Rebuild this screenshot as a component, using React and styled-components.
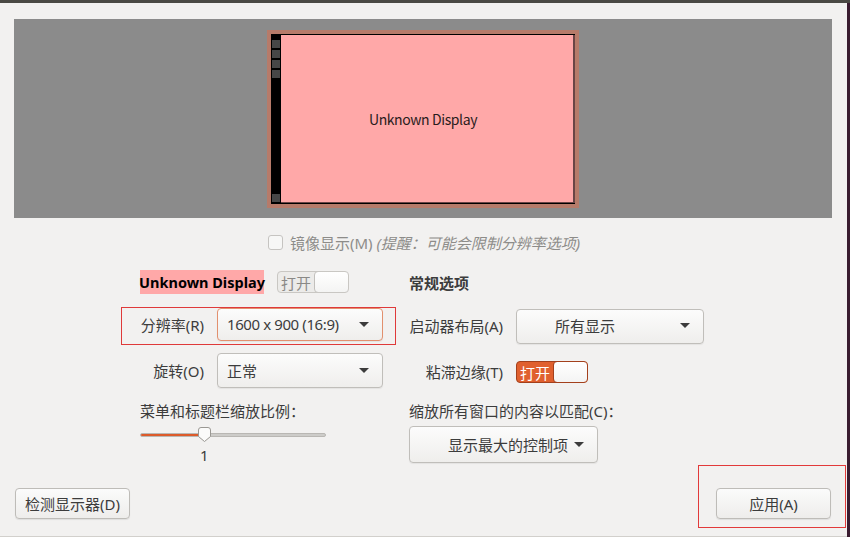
import React from "react";
import styled, { createGlobalStyle } from "styled-components";

const Global = createGlobalStyle`
  html, body { margin: 0; padding: 0; background: #f2f1f0; }
  body { font-family: "Noto Sans", "Noto Sans CJK SC", sans-serif; font-size: 15px; color: #3c3c3c; }
  * { box-sizing: border-box; }
`;

const Root = styled.div`
  width: 850px;
  height: 537px;
  display: flex;
  flex-direction: column;
  overflow: hidden;
`;

const TopBar = styled.div`
  height: 3px;
  background: #4a4944;
  flex: none;
`;

const Main = styled.div`
  flex: 1;
  display: flex;
  min-height: 0;
`;

const Content = styled.div`
  width: 847px;
  display: flex;
  flex-direction: column;
  background: #f2f1f0;
  border-bottom: 1px solid #d2d0cc;
`;

const Edge = styled.div`
  flex: 1;
  background: #3a1c30;
`;

const Preview = styled.div`
  margin: 16px 0 0 14px;
  width: 818px;
  height: 199px;
  background: #8b8b8b;
  display: flex;
  align-items: center;
  justify-content: center;
  flex: none;
`;

const Monitor = styled.div`
  width: 312px;
  height: 178px;
  border: 4px solid #b67b6a;
  background: #000;
  display: flex;
`;

const Launcher = styled.div`
  width: 10px;
  display: flex;
  flex-direction: column;
  padding: 6px 1px 2px 1px;
  gap: 2px;
`;

const LauncherIcon = styled.div`
  width: 8px;
  height: 8px;
  background: #474747;
  margin-top: ${(p) => (p.$push ? "auto" : "0")};
`;

const Desktop = styled.div`
  flex: 1;
  margin: 1px 0 1px 0;
  background: #ffa8a8;
  border-right: 2px solid #6a4545;
  border-bottom: 1px solid #6a4545;
  display: flex;
  align-items: center;
  justify-content: center;
  padding: 1px 8px 0 0;
  font-family: "Noto Sans CJK SC", "Noto Sans", sans-serif;
  font-size: 14px;
  letter-spacing: -0.4px;
  color: #2a1c1c;
`;

const MirrorRow = styled.div`
  margin-top: 16px;
  height: 16px;
  display: flex;
  align-items: center;
  justify-content: center;
  gap: 7px;
  color: #8d8c89;
  padding-left: 1px;
`;

const CheckBox = styled.span`
  width: 15px;
  height: 15px;
  border: 1px solid #c6c4c1;
  border-radius: 3px;
  background: #f7f7f6;
  flex: none;
`;

const Hint = styled.i`
  font-style: italic;
`;

const Settings = styled.div`
  padding-left: 121px;
  display: flex;
  flex-direction: column;
`;

const Row = styled.div`
  display: grid;
  grid-template-columns: 275px 296px;
  column-gap: 12px;
  margin-top: ${(p) => p.$top}px;
  height: ${(p) => p.$h}px;
  align-items: center;
`;

const Cell = styled.div`
  display: flex;
  align-items: center;
  gap: 13px;
  padding-left: ${(p) => p.$pad || 0}px;
  height: 100%;
`;

const DisplayName = styled.div`
  width: 124px;
  height: 24px;
  background: #ffa8a8;
  color: #000;
  font-weight: 700;
  display: flex;
  align-items: center;
  justify-content: center;
  white-space: nowrap;
  font-size: 14.5px;
`;

const Switch = styled.div`
  width: 72px;
  height: 22px;
  border-radius: 4px;
  border: 1px solid ${(p) => (p.$on ? "#a3401c" : "#c9c7c3")};
  background: ${(p) => (p.$on ? "#e0602e" : "#ecebe9")};
  display: flex;
  align-items: stretch;
  overflow: hidden;
`;

const SwitchText = styled.span`
  flex: 1;
  display: flex;
  align-items: center;
  padding-left: 3px;
  color: ${(p) => (p.$on ? "#ffffff" : "#8a8986")};
`;

const Knob = styled.span`
  width: 35px;
  background: linear-gradient(#ffffff, #f4f4f3);
  border: 1px solid ${(p) => (p.$on ? "#a3401c" : "#c2c0bc")};
  border-radius: 4px;
  margin: -1px -1px -1px 0;
`;

const Title = styled.div`
  font-weight: 700;
  color: #3c3c3c;
  padding-left: 1px;
`;

const Field = styled.div`
  width: 275px;
  height: 38px;
  display: flex;
  align-items: flex-start;
  gap: 13px;
  align-self: stretch;
  border: 1px solid ${(p) => (p.$marked ? "#df3a3a" : "transparent")};
  border-top-width: ${(p) => (p.$marked ? 1 : 0)}px;
`;

const Label = styled.div`
  width: ${(p) => p.$w}px;
  height: ${(p) => p.$h}px;
  display: flex;
  align-items: center;
  justify-content: flex-end;
  white-space: nowrap;
  flex: none;
  padding-bottom: 1px;
`;

const Combo = styled.div`
  width: ${(p) => p.$w}px;
  height: ${(p) => p.$h}px;
  flex: none;
  border: 1px solid ${(p) => (p.$focus ? "#e2906e" : "#c0beba")};
  border-radius: 4px;
  background: linear-gradient(#fcfcfc, #efeeec);
  box-shadow: 0 1px 1px rgba(0, 0, 0, 0.06);
  display: flex;
  align-items: center;
  padding: 0 13px 1px ${(p) => p.$indent}px;
  color: #3c3c3c;
  white-space: nowrap;
`;

const ComboText = styled.span`
  flex: 1;
  letter-spacing: ${(p) => p.$ls || 0}px;
`;

const Arrow = styled.span`
  width: 0;
  height: 0;
  border-left: 5px solid transparent;
  border-right: 5px solid transparent;
  border-top: 5px solid #3c3c3c;
  flex: none;
`;

const Text = styled.div`
  padding-left: ${(p) => p.$pad || 0}px;
  white-space: nowrap;
`;

const SliderCell = styled.div`
  padding-left: 19px;
  align-self: start;
  display: flex;
  flex-direction: column;
  padding-top: 1px;
`;

const Track = styled.div`
  position: relative;
  width: 186px;
  height: 15px;
  display: flex;
  align-items: center;
`;

const Rail = styled.div`
  width: 100%;
  height: 4px;
  border-radius: 2px;
  background: #cdccc9;
  border: 1px solid #b9b7b3;
  overflow: hidden;
  display: flex;
`;

const Fill = styled.div`
  height: 100%;
  background: #dc5b2b;
`;

const Thumb = styled.svg`
  position: absolute;
  top: -1px;
  width: 15px;
  height: 17px;
`;

const Value = styled.div`
  padding-left: 60px;
  margin-top: 5px;
  line-height: 16px;
`;

const Bottom = styled.div`
  margin-top: 2px;
  display: flex;
  justify-content: space-between;
  align-items: flex-start;
`;

const Button = styled.div`
  width: ${(p) => p.$w}px;
  height: 31px;
  border: 1px solid #bebcb8;
  border-radius: 4px;
  background: linear-gradient(#fbfbfb, #eeedeb);
  box-shadow: 0 1px 1px rgba(0, 0, 0, 0.08);
  display: flex;
  align-items: center;
  justify-content: center;
  color: #3c3c3c;
  white-space: nowrap;
`;

const LeftButtonWrap = styled.div`
  margin: 23px 0 0 15px;
`;

const ApplyFrame = styled.div`
  width: 148px;
  height: 63px;
  border: 1px solid #e23a3a;
  padding: 22px 0 0 17px;
  margin-right: 1px;
`;

export default function App() {
  const pct = 64 / 186;
  return (
    <Root>
      <Global />
      <TopBar />
      <Main>
        <Content>
          <Preview>
            <Monitor>
              <Launcher>
                <LauncherIcon />
                <LauncherIcon />
                <LauncherIcon />
                <LauncherIcon />
                <LauncherIcon $push />
              </Launcher>
              <Desktop>Unknown Display</Desktop>
            </Monitor>
          </Preview>

          <MirrorRow>
            <CheckBox />
            <span>
              镜像显示(M) <Hint>(提醒：可能会限制分辨率选项)</Hint>
            </span>
          </MirrorRow>

          <Settings>
            <Row $top={20} $h={24}>
              <Cell $pad={19}>
                <DisplayName>Unknown Display</DisplayName>
                <Switch>
                  <SwitchText>打开</SwitchText>
                  <Knob />
                </Switch>
              </Cell>
              <Cell>
                <Title>常规选项</Title>
              </Cell>
            </Row>

            <Row $top={13} $h={38}>
              <Field $marked>
                <Label $w={82} $h={33}>分辨率(R)</Label>
                <Combo $w={166} $h={33} $indent={9} $focus>
                  <ComboText $ls={-0.4}>1600 x 900 (16:9)</ComboText>
                  <Arrow />
                </Combo>
              </Field>
              <Cell>
                <Label $w={95} $h={35}>启动器布局(A)</Label>
                <Combo $w={188} $h={35} $indent={38}>
                  <ComboText>所有显示</ComboText>
                  <Arrow />
                </Combo>
              </Cell>
            </Row>

            <Row $top={8} $h={35}>
              <Field>
                <Label $w={82} $h={35}>旋转(O)</Label>
                <Combo $w={166} $h={35} $indent={9}>
                  <ComboText>正常</ComboText>
                  <Arrow />
                </Combo>
              </Field>
              <Cell>
                <Label $w={95} $h={35}>粘滞边缘(T)</Label>
                <Switch $on>
                  <SwitchText $on>打开</SwitchText>
                  <Knob $on />
                </Switch>
              </Cell>
            </Row>

            <Row $top={12} $h={18}>
              <Text $pad={19}>菜单和标题栏缩放比例：</Text>
              <Text $pad={1}>缩放所有窗口的内容以匹配(C)：</Text>
            </Row>

            <Row $top={8} $h={37}>
              <SliderCell>
                <Track>
                  <Rail>
                    <Fill style={{ width: `${pct * 100}%` }} />
                  </Rail>
                  <Thumb
                    viewBox="0 0 15 17"
                    style={{ left: `calc(${pct * 100}% - 7px)` }}
                  >
                    <path
                      d="M1.5 4 Q1.5 1.5 4 1.5 H11 Q13.5 1.5 13.5 4 V10.5 L7.5 15.5 L1.5 10.5 Z"
                      fill="#fbfbfa"
                      stroke="#9a9893"
                      strokeWidth="1"
                    />
                  </Thumb>
                </Track>
                <Value>1</Value>
              </SliderCell>
              <Cell $pad={1}>
                <Combo $w={189} $h={37} $indent={38}>
                  <ComboText>显示最大的控制项</ComboText>
                  <Arrow />
                </Combo>
              </Cell>
            </Row>
          </Settings>

          <Bottom>
            <LeftButtonWrap>
              <Button $w={115}>检测显示器(D)</Button>
            </LeftButtonWrap>
            <ApplyFrame>
              <Button $w={115}>应用(A)</Button>
            </ApplyFrame>
          </Bottom>
        </Content>
        <Edge />
      </Main>
    </Root>
  );
}
